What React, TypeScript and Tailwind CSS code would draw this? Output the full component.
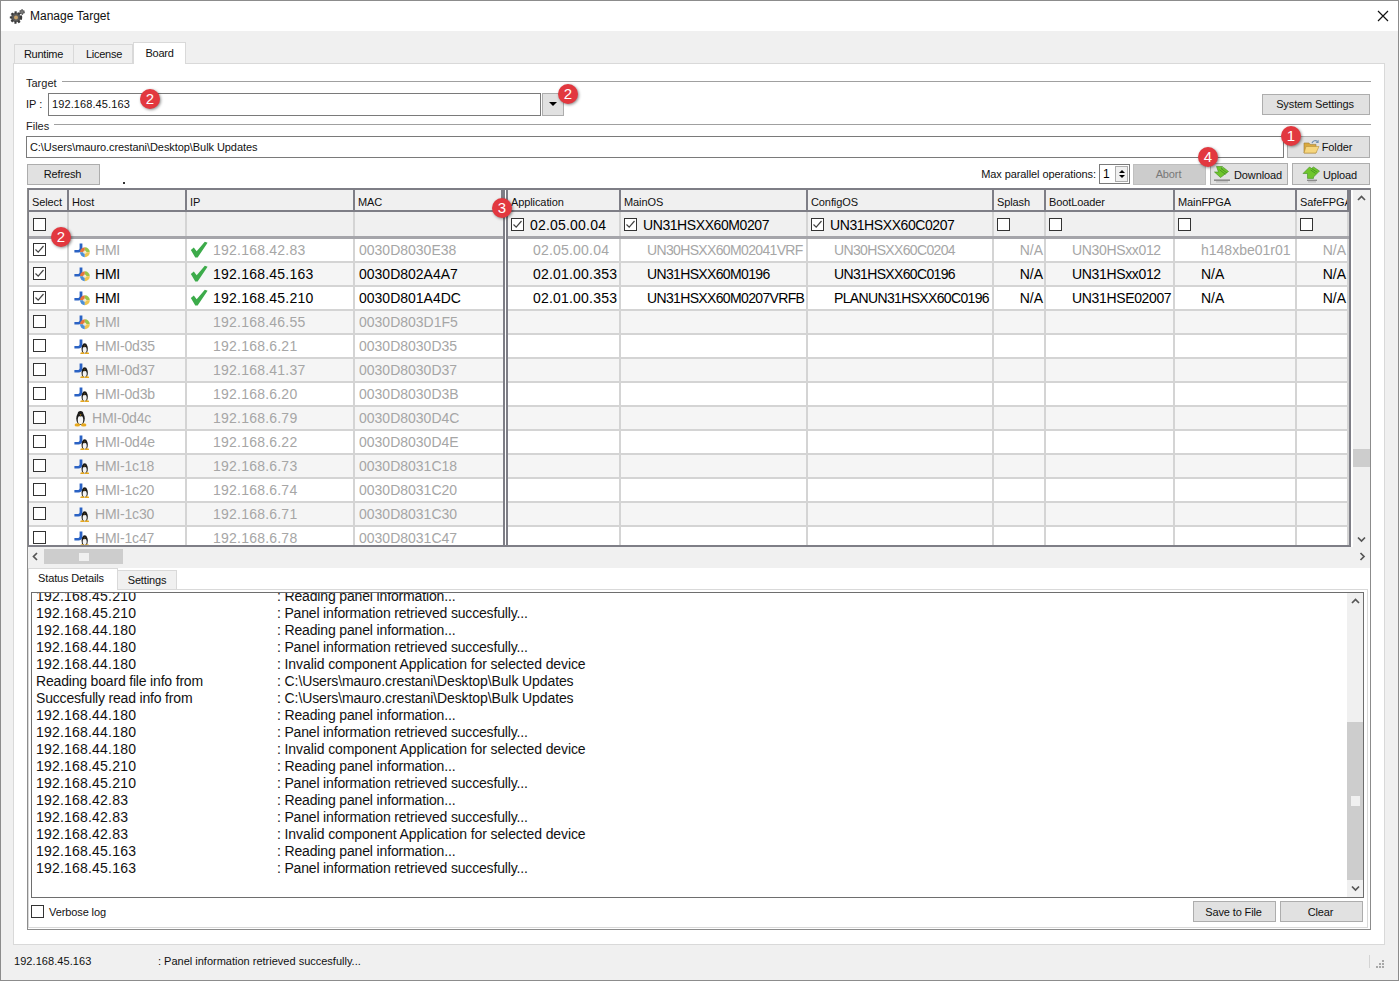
import React from "react";

const FONT = "font-['Liberation_Sans',Arial,sans-serif]";

function Badge({ n, cls }: { n: number; cls: string }) {
  return (
    <div
      className={`absolute z-20 w-[20px] h-[20px] rounded-full bg-[#e2383f] text-white text-[15px] leading-[20px] text-center shadow-[1px_1px_3px_rgba(0,0,0,0.45)] ${cls}`}
    >
      {n}
    </div>
  );
}

function Check({ on }: { on?: boolean }) {
  return (
    <div className="w-[13px] h-[13px] border border-[#333] bg-white shrink-0 flex items-center justify-center">
      {on && (
        <svg width="11" height="11" viewBox="0 0 11 11" fill="none">
          <path d="M1.5 5.5 L4.2 8.2 L9.5 2" stroke="#444" strokeWidth="1.2" />
        </svg>
      )}
    </div>
  );
}

function Btn({ children, cls, disabled }: { children?: React.ReactNode; cls?: string; disabled?: boolean }) {
  return (
    <div
      className={`flex items-center justify-center border text-[11px] tracking-[-0.12px] ${
        disabled ? "bg-[#cccccc] border-[#bfbfbf] text-[#787878]" : "bg-[#e1e1e1] border-[#adadad] text-[#111]"
      } ${cls ?? ""}`}
    >
      {children}
    </div>
  );
}

function Gear() {
  return (
    <svg width="17" height="17" viewBox="0 0 17 17">
      <circle cx="7" cy="9.5" r="5" fill="#5a5a5a" stroke="#3a3a3a" strokeWidth="2.4" strokeDasharray="2 1.6" />
      <circle cx="7" cy="9.5" r="2" fill="#c9a36a" />
      <circle cx="13" cy="4" r="2.2" fill="#777" stroke="#444" strokeWidth="1.2" strokeDasharray="1.2 1" />
    </svg>
  );
}

function GreenCheck() {
  return (
    <svg className="ml-px -mt-[2px]" width="18" height="17" viewBox="0 0 17 16">
      <path d="M0.8 8.5 L3.6 6.2 L6.3 9.6 L14 0.6 L16.6 1.6 L7.2 15.6 L5 15.6 Z" fill="#3cab4a" />
    </svg>
  );
}

function Penguin({ x = 0, y = 0, s = 1 }: { x?: number; y?: number; s?: number }) {
  return (
    <g transform={`translate(${x} ${y}) scale(${s})`}>
      <ellipse cx="6" cy="8" rx="4" ry="6" fill="#1a1a1a" />
      <ellipse cx="6" cy="9.5" rx="2.6" ry="4" fill="#f4f4f4" />
      <circle cx="6" cy="3.6" r="2.6" fill="#1a1a1a" />
      <path d="M5 4.2 h2 l-1 1.2 z" fill="#e8a91e" />
      <ellipse cx="3" cy="14" rx="2.6" ry="1.5" fill="#e8a91e" />
      <ellipse cx="9" cy="14" rx="2.6" ry="1.5" fill="#e8a91e" />
    </g>
  );
}

function BlueHook() {
  return (
    <path
      d="M5.6 1.5 h2.8 v5 c0 2.8 -1.8 4 -4 4 H0.4 V8 h3 c1.6 0 2.2 -.6 2.2 -2 Z"
      fill="#2a62c4"
    />
  );
}

function HmiWin() {
  return (
    <svg width="16" height="16" viewBox="0 0 16 16">
      <BlueHook />
      <path d="M10.8 5.2 A5 5 0 0 0 6 10.2 h4.8 Z" fill="#e8743a" />
      <path d="M10.8 5.2 A5 5 0 0 1 15.8 10.2 h-5 Z" fill="#9cc447" />
      <path d="M6 10.2 A5 5 0 0 0 10.8 15.2 v-5 Z" fill="#4a8fd8" />
      <path d="M15.8 10.2 A5 5 0 0 1 10.8 15.2 v-5 Z" fill="#efc550" />
      <circle cx="10.8" cy="10.2" r="1.6" fill="#f4e9c8" />
    </svg>
  );
}

function HmiLin() {
  return (
    <svg width="16" height="16" viewBox="0 0 16 16">
      <BlueHook />
      <Penguin x={6} y={4.4} s={0.78} />
    </svg>
  );
}

function Linux() {
  return (
    <svg width="13" height="17" viewBox="0 0 12 16">
      <Penguin />
    </svg>
  );
}

function FolderIcon() {
  return (
    <svg width="17" height="16" viewBox="0 0 17 16">
      <path d="M1 4 h5 l1 1.4 h6 v8.6 H1 Z" fill="#d9a93f" stroke="#9a7a32" strokeWidth=".6" />
      <path d="M3 7.5 h13 l-3 6.5 H1 Z" fill="#f6d67e" stroke="#b8923e" strokeWidth=".6" />
      <path d="M9 4 c1-2.4 3.4-3 5.4-1.8" stroke="#6f8fb0" strokeWidth="1.2" fill="none" />
      <path d="M15.6 0.8 v3.2 h-3 z" fill="#6f8fb0" />
    </svg>
  );
}

function DownloadIcon() {
  return (
    <svg width="19" height="17" viewBox="0 0 19 17">
      <path d="M3.5 0.5 h6 l-1 2 2-1 5 4 -8 6 -6 -5.5 h4 Z" fill="#6fc52c" stroke="#3f8f1d" strokeWidth=".6" />
      <path d="M8 2.5 l6 4.5 M6.5 3.8 l6 4.5" stroke="#3f8f1d" strokeWidth=".8" />
      <rect x="1" y="13.4" width="16" height="1.6" fill="#8c8c8c" />
      <rect x="3" y="15.4" width="12" height="1" fill="#b5b5b5" />
    </svg>
  );
}

function UploadIcon() {
  return (
    <svg width="19" height="17" viewBox="0 0 19 17">
      <path d="M1 7.5 L7.5 1 l2 1.4 2-1.4 6 4 -6 6 v1.4 H5.5 V7.5 Z" fill="#6fc52c" stroke="#3f8f1d" strokeWidth=".6" />
      <path d="M9.5 2.5 l5.5 3.6 M8.6 4 l5 3.4" stroke="#3f8f1d" strokeWidth=".8" />
      <rect x="5" y="13.6" width="10" height="1.4" fill="#8c8c8c" />
      <rect x="6" y="15.4" width="8" height="1" fill="#b5b5b5" />
    </svg>
  );
}

const Chev = ({ d }: { d: "up" | "down" | "left" | "right" }) => {
  const p = {
    up: "M1 6 L4.5 2.5 L8 6",
    down: "M1 2.5 L4.5 6 L8 2.5",
    left: "M6 1 L2.5 4.5 L6 8",
    right: "M2.5 1 L6 4.5 L2.5 8",
  }[d];
  return (
    <svg width="9" height="9" viewBox="0 0 9 9" fill="none">
      <path d={p} stroke="#555" strokeWidth="1.7" />
    </svg>
  );
};

type Row = {
  on?: boolean;
  dim: boolean;
  os: "win" | "lin" | "tux";
  host: string;
  ok?: boolean;
  ip: string;
  mac: string;
  right?: string[];
};

const rows: Row[] = [
  { on: true, dim: true, os: "win", host: "HMI", ok: true, ip: "192.168.42.83", mac: "0030D8030E38",
    right: ["02.05.00.04", "UN30HSXX60M02041VRF", "UN30HSXX60C0204", "N/A", "UN30HSxx012", "h148xbe01r01", "N/A"] },
  { on: true, dim: false, os: "win", host: "HMI", ok: true, ip: "192.168.45.163", mac: "0030D802A4A7",
    right: ["02.01.00.353", "UN31HSXX60M0196", "UN31HSXX60C0196", "N/A", "UN31HSxx012", "N/A", "N/A"] },
  { on: true, dim: false, os: "win", host: "HMI", ok: true, ip: "192.168.45.210", mac: "0030D801A4DC",
    right: ["02.01.00.353", "UN31HSXX60M0207VRFB", "PLANUN31HSXX60C0196", "N/A", "UN31HSE02007", "N/A", "N/A"] },
  { dim: true, os: "win", host: "HMI", ip: "192.168.46.55", mac: "0030D803D1F5" },
  { dim: true, os: "lin", host: "HMI-0d35", ip: "192.168.6.21", mac: "0030D8030D35" },
  { dim: true, os: "lin", host: "HMI-0d37", ip: "192.168.41.37", mac: "0030D8030D37" },
  { dim: true, os: "lin", host: "HMI-0d3b", ip: "192.168.6.20", mac: "0030D8030D3B" },
  { dim: true, os: "tux", host: "HMI-0d4c", ip: "192.168.6.79", mac: "0030D8030D4C" },
  { dim: true, os: "lin", host: "HMI-0d4e", ip: "192.168.6.22", mac: "0030D8030D4E" },
  { dim: true, os: "lin", host: "HMI-1c18", ip: "192.168.6.73", mac: "0030D8031C18" },
  { dim: true, os: "lin", host: "HMI-1c20", ip: "192.168.6.74", mac: "0030D8031C20" },
  { dim: true, os: "lin", host: "HMI-1c30", ip: "192.168.6.71", mac: "0030D8031C30" },
  { dim: true, os: "lin", host: "HMI-1c47", ip: "192.168.6.78", mac: "0030D8031C47" },
];

const LEFT = "grid grid-cols-[40px_118px_168px_148px]";
const RIGHT = "grid grid-cols-[113px_187px_186px_52px_129px_122px_52px]";

const rightHeads = ["Application", "MainOS", "ConfigOS", "Splash", "BootLoader", "MainFPGA", "SafeFPGA"];
const filterChecks: [boolean, string, string][] = [
  [true, "02.05.00.04", "tracking-[0.2px]"],
  [true, "UN31HSXX60M0207", "tracking-[-0.42px]"],
  [true, "UN31HSXX60C0207", "tracking-[-0.42px]"],
  [false, "", ""],
  [false, "", ""],
  [false, "", ""],
  [false, "", ""],
];

const rightAlign = [
  "justify-start pl-[25px] tracking-[0.2px]",
  "justify-start pl-[26px] tracking-[-0.65px]",
  "justify-start pl-[26px] tracking-[-0.65px]",
  "justify-end pr-[1px]",
  "justify-start pl-[26px] tracking-[-0.35px]",
  "justify-start pl-[26px]",
  "justify-end pr-[1px]",
];

function Head({ t }: { t: string }) {
  return (
    <div className="h-[22px] pt-[4px] bg-[#f0f0f0] border-r-2 border-b-2 border-[#7e7e86] flex items-center pl-[3px] text-[11px] tracking-[-0.1px] text-[#111] overflow-hidden whitespace-nowrap">
      {t}
    </div>
  );
}

const log: [string, string][] = [
  ["192.168.45.210", ": Reading panel information..."],
  ["192.168.45.210", ": Panel information retrieved succesfully..."],
  ["192.168.44.180", ": Reading panel information..."],
  ["192.168.44.180", ": Panel information retrieved succesfully..."],
  ["192.168.44.180", ": Invalid component Application for selected device"],
  ["Reading board file info from", ": C:\\Users\\mauro.crestani\\Desktop\\Bulk Updates"],
  ["Succesfully read info from", ": C:\\Users\\mauro.crestani\\Desktop\\Bulk Updates"],
  ["192.168.44.180", ": Reading panel information..."],
  ["192.168.44.180", ": Panel information retrieved succesfully..."],
  ["192.168.44.180", ": Invalid component Application for selected device"],
  ["192.168.45.210", ": Reading panel information..."],
  ["192.168.45.210", ": Panel information retrieved succesfully..."],
  ["192.168.42.83", ": Reading panel information..."],
  ["192.168.42.83", ": Panel information retrieved succesfully..."],
  ["192.168.42.83", ": Invalid component Application for selected device"],
  ["192.168.45.163", ": Reading panel information..."],
  ["192.168.45.163", ": Panel information retrieved succesfully..."],
];

function SectionLabel({ t }: { t: string }) {
  return (
    <div className="flex items-center h-[14px] text-[11px] text-[#222]">
      <span className="pr-[5px]">{t}</span>
      <div className="flex-1 h-px bg-[#a0a0a0] -translate-y-[2px]" />
    </div>
  );
}

export default function App() {
  return (
    <div className={`${FONT} relative w-[1399px] h-[981px] border border-[#8c8c8c] bg-[#f0f0f0] flex flex-col overflow-hidden`}>
      {/* title bar */}
      <div className="h-[30px] shrink-0 bg-white flex items-center pl-[8px] pr-[9px] text-[12px] text-[#111]">
        <Gear />
        <span className="ml-[4px]">Manage Target</span>
        <svg className="ml-auto" width="12" height="12" viewBox="0 0 12 12">
          <path d="M1 1 L11 11 M11 1 L1 11" stroke="#111" strokeWidth="1.2" />
        </svg>
      </div>

      {/* tabs */}
      <div className="h-[32px] shrink-0 flex items-end pl-[13px] text-[11px] text-[#111] tracking-[-0.25px]">
        <div className="h-[19px] w-[60px] pr-[1px] bg-[#f0f0f0] border border-b-0 border-[#d9d9d9] flex items-center justify-center">Runtime</div>
        <div className="h-[19px] w-[59px] pl-[2px] bg-[#f0f0f0] border border-l-0 border-b-0 border-[#d9d9d9] flex items-center justify-center">License</div>
        <div className="h-[22px] w-[53px] bg-white border border-b-0 border-[#d9d9d9] flex items-center justify-center -mb-px z-10">Board</div>
      </div>

      {/* page */}
      <div className="ml-[12px] mr-[13px] h-[882px] shrink-0 bg-white border border-[#d9d9d9] pl-[12px] pr-[13px] pt-[12px] flex flex-col">
        <SectionLabel t="Target" />
        <div className="relative flex items-center h-[24px] mt-[2px] text-[11px]">
          <span className="w-[22px] text-[#111]">IP :</span>
          <div className="w-[493px] h-[23px] border border-[#7a7a7a] bg-white flex items-center pl-[3px] pt-px tracking-[0.1px] text-[#111]">192.168.45.163</div>
          <div className="ml-[1px] w-[22px] h-[23px] bg-[#e1e1e1] border border-[#adadad] flex items-center justify-center">
            <div className="w-0 h-0 border-l-[4px] border-r-[4px] border-t-[4px] border-l-transparent border-r-transparent border-t-black" />
          </div>
          <Btn cls="ml-auto w-[108px] h-[21px] mr-px pr-[2px]">System Settings</Btn>
          <Badge n={2} cls="left-[114px] top-[-3px]" />
          <Badge n={2} cls="left-[532px] top-[-8px]" />
        </div>
        <div className="mt-[3px]"><SectionLabel t="Files" /></div>
        <div className="relative flex items-center h-[22px] mt-[3px] text-[11px]">
          <div className="w-[1258px] h-[22px] border border-[#7a7a7a] bg-white flex items-center pl-[3px] pt-px tracking-[-0.07px] text-[#111]">C:\Users\mauro.crestani\Desktop\Bulk Updates</div>
          <Btn cls="ml-[3px] w-[83px] h-[22px] gap-[2px] pr-[2px]"><FolderIcon /><span>Folder</span></Btn>
          <Badge n={1} cls="left-[1255px] top-[-10px]" />
        </div>
        <div className="relative flex items-center h-[22px] mt-[5px] text-[11px]">
          <Btn cls="ml-px w-[73px] h-[21px] pr-[2px]">Refresh</Btn>
          <div className="w-[2px] h-[2px] bg-[#333] ml-[23px] mt-[17px]" />
          <span className="ml-auto pt-px text-[#111] tracking-[-0.08px]">Max parallel operations:</span>
          <div className="ml-[3px] w-[31px] h-[20px] border border-[#7a7a7a] bg-white flex items-center pl-[3px] text-[12px]">
            1
            <div className="ml-auto mr-px w-[13px] h-[16px] border border-[#adadad] bg-[#f0f0f0] flex flex-col items-center justify-around py-[2px]">
              <div className="w-0 h-0 border-l-[3px] border-r-[3px] border-b-[3px] border-l-transparent border-r-transparent border-b-black" />
              <div className="w-0 h-0 border-l-[3px] border-r-[3px] border-t-[3px] border-l-transparent border-r-transparent border-t-black" />
            </div>
          </div>
          <Btn disabled cls="ml-[3px] w-[73px] h-[21px] pt-px pr-[2px]">Abort</Btn>
          <Btn cls="ml-[4px] w-[78px] h-[22px] gap-[2px] pr-[3px]"><DownloadIcon /><span className="pt-[2px]">Download</span></Btn>
          <Btn cls="ml-[4px] w-[78px] h-[22px] gap-[2px] mr-px pr-[3px]"><UploadIcon /><span className="pt-[2px]">Upload</span></Btn>
          <Badge n={4} cls="left-[1172px] top-[-16px]" />
        </div>

        {/* bordered area: grid, scrollbars, log panel */}
        <div className="relative mt-[3px] ml-px w-[1344px] h-[742px] shrink-0 border-x border-b border-[#8c8c8c] flex flex-col">
          <Badge n={3} cls="left-[464px] top-[10px]" />
          <Badge n={2} cls="left-[23px] top-[39px]" />

          {/* grid */}
          <div className="h-[359px] shrink-0 border-t-2 border-[#7e7e86] flex bg-white text-[14px]">
            <div className="flex border-l border-r-2 border-b-2 border-[#7e7e86] min-w-0">
              {/* left */}
              <div className="w-[476px] shrink-0 flex flex-col border-r-2 border-[#7e7e86] overflow-hidden">
                <div className={LEFT}>
                  {["Select", "Host", "IP", "MAC"].map((t) => <Head key={t} t={t} />)}
                </div>
                <div className={`${LEFT} h-[27px] shrink-0 bg-[#f0f0f0] border-b-[3px] border-[#a5a5aa]`}>
                  <div className="border-r-2 border-[#d4d4d4] flex items-center pl-[4px]"><Check /></div>
                  <div className="border-r-2 border-[#d4d4d4]" />
                  <div className="border-r-2 border-[#d4d4d4]" />
                  <div />
                </div>
                <div className="flex-1 overflow-hidden">
                  {rows.map((r, i) => (
                    <div key={i} className={`${LEFT} h-[24px] border-b-2 border-[#d4d4d4] ${i % 2 ? "bg-[#f5f5f5]" : "bg-white"} ${r.dim ? "text-[#a6a6a6]" : "text-black"}`}>
                      <div className="border-r-2 border-[#d4d4d4] flex items-center pl-[4px] pb-[2px]"><Check on={r.on} /></div>
                      <div className="border-r-2 border-[#d4d4d4] flex items-center pl-[5px] tracking-[-0.2px] whitespace-nowrap">
                        {r.os === "tux" ? <Linux /> : r.os === "lin" ? <HmiLin /> : <HmiWin />}
                        <span className="ml-[5px]">{r.host}</span>
                      </div>
                      <div className="border-r-2 border-[#d4d4d4] flex items-center pl-[2px] whitespace-nowrap">
                        <div className="w-[24px] shrink-0">{r.ok && <GreenCheck />}</div>
                        <span className="tracking-[0.22px]">{r.ip}</span>
                      </div>
                      <div className="flex items-center pl-[4px] whitespace-nowrap">{r.mac}</div>
                    </div>
                  ))}
                </div>
              </div>
              {/* gap between panes */}
              <div className="w-[1px] shrink-0 bg-white" />
              {/* right */}
              <div className="w-[843px] shrink-0 flex flex-col border-l-2 border-[#7e7e86] overflow-hidden">
                <div className={RIGHT}>
                  {rightHeads.map((t) => <Head key={t} t={t} />)}
                </div>
                <div className={`${RIGHT} h-[27px] shrink-0 bg-[#f0f0f0] border-b-[3px] border-[#a5a5aa]`}>
                  {filterChecks.map(([on, t, tr], i) => (
                    <div key={i} className="border-r-2 border-[#d4d4d4] flex items-center pl-[3px] gap-[6px] whitespace-nowrap text-black">
                      <Check on={on} />
                      <span className={`pt-[2px] ${tr}`}>{t}</span>
                    </div>
                  ))}
                </div>
                <div className="flex-1 overflow-hidden">
                  {rows.map((r, i) => (
                    <div key={i} className={`${RIGHT} h-[24px] border-b-2 border-[#d4d4d4] ${i % 2 ? "bg-[#f5f5f5]" : "bg-white"} ${r.dim ? "text-[#a6a6a6]" : "text-black"}`}>
                      {rightAlign.map((a, j) => (
                        <div key={j} className={`border-r-2 border-[#d4d4d4] flex items-center whitespace-nowrap overflow-hidden ${a}`}>
                          {r.right ? r.right[j] : ""}
                        </div>
                      ))}
                    </div>
                  ))}
                </div>
              </div>
            </div>
            {/* vertical scrollbar */}
            <div className="flex-1 ml-[2px] bg-[#f0f0f0] flex flex-col items-center justify-between pt-[4px] pb-[3px] relative">
              <Chev d="up" />
              <div className="absolute left-0 right-0 top-[259px] h-[18px] bg-[#cdcdcd]" />
              <Chev d="down" />
            </div>
          </div>

          {/* horizontal scrollbar */}
          <div className="h-[21px] shrink-0 bg-[#f0f0f0] flex items-center pl-[3px] pr-[3px] pb-[2px]">
            <Chev d="left" />
            <div className="ml-[4px] w-[79px] h-[15px] bg-[#cdcdcd] flex items-center justify-center">
              <div className="w-[10px] h-[8px] bg-[#f0f0f0]" />
            </div>
            <div className="ml-auto"><Chev d="right" /></div>
          </div>

          {/* bottom tabs */}
          <div className="flex items-end h-[21px] shrink-0 text-[11px] text-[#111] tracking-[-0.15px]">
            <div className="h-[22px] w-[90px] pb-[2px] pr-[4px] bg-white border border-b-0 border-[#d9d9d9] flex items-center justify-center -mb-px z-10">Status Details</div>
            <div className="h-[19px] w-[59px] bg-[#f0f0f0] border border-l-0 border-b-0 border-[#d9d9d9] flex items-center justify-center">Settings</div>
          </div>

          {/* log panel */}
          <div className="flex-1 mr-[2px] mb-px border border-[#d9d9d9] bg-white pt-[2px] pl-[2px] pr-[3px] flex flex-col min-h-0">
            <div className="h-[306px] shrink-0 border border-[#6e6e6e] bg-white flex overflow-hidden">
              <div className="flex-1 overflow-hidden relative text-[14px] leading-[17px] text-[#111]">
                <div className="-mt-[5px] pl-[4px]">
                  {log.map(([a, b], i) => (
                    <div key={i} className="flex h-[17px] whitespace-nowrap">
                      <span className={`w-[241px] shrink-0 ${a[0] === "1" ? "tracking-[0.2px]" : "tracking-[-0.18px]"}`}>{a}</span>
                      <span className={b.startsWith(": P") ? "tracking-[-0.17px]" : b.startsWith(": R") ? "tracking-[-0.15px]" : "tracking-[-0.1px]"}>{b}</span>
                    </div>
                  ))}
                </div>
              </div>
              <div className="w-[16px] shrink-0 bg-[#f0f0f0] flex flex-col items-center relative">
                <div className="h-[17px] flex items-center"><Chev d="up" /></div>
                <div className="mt-[112px] w-full h-[158px] bg-[#cdcdcd] flex items-center justify-center">
                  <div className="w-[9px] h-[10px] bg-[#f0f0f0]" />
                </div>
                <div className="h-[17px] flex items-center"><Chev d="down" /></div>
              </div>
            </div>
            <div className="flex items-center h-[21px] mt-[3px] text-[11px]">
              <Check />
              <span className="ml-[5px] pt-px text-[#111] tracking-[-0.1px]">Verbose log</span>
              <Btn cls="ml-auto w-[83px] h-[21px] pt-px pr-[2px]">Save to File</Btn>
              <Btn cls="ml-[4px] mr-px w-[83px] h-[21px] pt-px pr-[2px]">Clear</Btn>
            </div>
          </div>
        </div>
      </div>

      {/* status bar */}
      <div className="flex-1 flex items-center text-[11px] text-[#111] pl-[13px] pr-[14px] relative pb-[3px]">
        <span className="w-[144px] tracking-[0.06px]">192.168.45.163</span>
        <span>: Panel information retrieved succesfully...</span>
        <div className="ml-auto w-px h-[13px] bg-[#d4d4d4] mr-[5px]" />
        <svg className="mt-[5px]" width="9" height="9" viewBox="0 0 9 9">
          <path d="M7 1h2v2H7zM4 4h2v2H4zM7 4h2v2H7zM1 7h2v2H1zM4 7h2v2H4zM7 7h2v2H7z" fill="#a8a8a8" />
        </svg>
      </div>
    </div>
  );
}
